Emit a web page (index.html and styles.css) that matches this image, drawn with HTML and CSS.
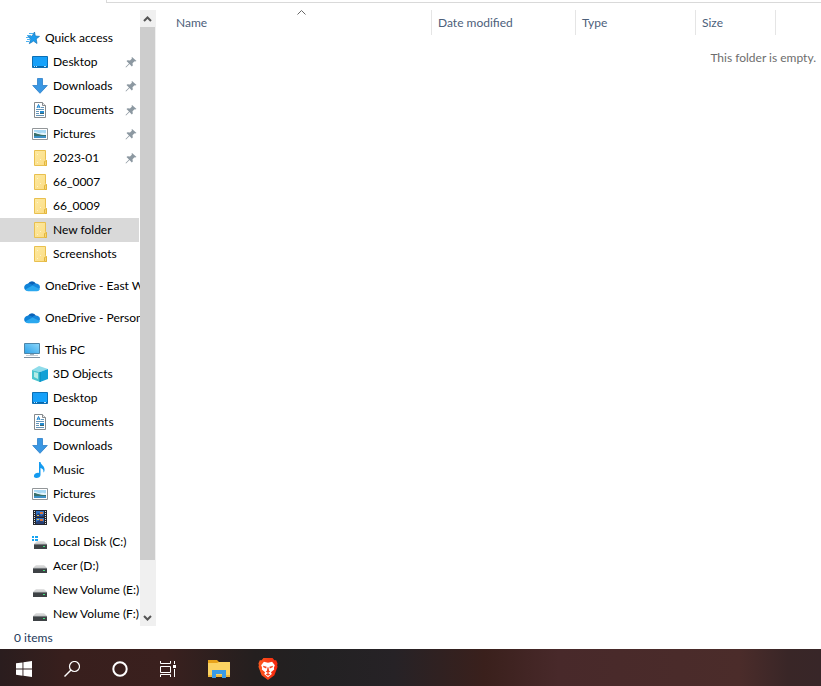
FILE: index.html
```html
<!DOCTYPE html>
<html lang="en">
<head>
  <meta charset="UTF-8">
  <title>New folder</title>
  <meta name="viewport" content="width=device-width, initial-scale=1">
  <link rel="stylesheet" href="styles.css">
</head>
<body>
  <!-- shared icons -->
  <svg class="sprite" aria-hidden="true">
    <defs>
      <linearGradient id="blue" x1="0" y1="0" x2="1" y2="1"><stop offset="0" stop-color="#1a9cf4"/><stop offset="1" stop-color="#12a5ff"/></linearGradient>
      <linearGradient id="screen" x1="0" y1="1" x2="1" y2="0"><stop offset="0" stop-color="#2ba0e8"/><stop offset="1" stop-color="#8dd8fb"/></linearGradient>
      <linearGradient id="paper" x1="0" y1="0" x2="1" y2="1"><stop offset="0" stop-color="#fde9a0"/><stop offset="1" stop-color="#fbdc84"/></linearGradient>
      <linearGradient id="lid" x1="0" y1="0" x2="0" y2="1"><stop offset="0" stop-color="#e6e6e6"/><stop offset="1" stop-color="#c4c6c7"/></linearGradient>
      <linearGradient id="lion" x1="0" y1="0" x2="1" y2="0"><stop offset="0" stop-color="#ff5a1f"/><stop offset="1" stop-color="#f4230c"/></linearGradient>
    </defs>
    <symbol id="i-star" viewBox="0 0 16 16">
      <path d="M10.500 2l.8 4 4.200.4-3.300 2.500.8 4.600-3.500-2.400-4.200 2.600 1.400-4.500L4 6.400l4-.2z" fill="#1c9cee" stroke="#1173b8" stroke-width=".7"/>
      <path d="M5 3.500h4M3 5.500h4M2 7.500h3M3 9.500h3M2 11.500h3" stroke="#4db3f3"/>
    </symbol>
    <symbol id="i-desktop" viewBox="0 0 16 16">
      <path d="M.5 2.500h15v11H.5z" fill="url(#blue)" stroke="#0b6fb5"/>
      <path d="M1 12.500h14" stroke="#0868ac"/><path d="M2 12.500h1m1 0h1m7 0h2" stroke="#bce5ff"/>
    </symbol>
    <symbol id="i-down" viewBox="0 0 16 16">
      <path d="M5.500.5h5v7h4.800L8 15.300.7 7.500h4.800z" fill="#3a97e3" stroke="#2b7fca" stroke-width=".8"/>
    </symbol>
    <symbol id="i-doc" viewBox="0 0 16 16">
      <path d="M2.500.5h8l3 3v12h-11z" fill="#fff" stroke="#85898c"/>
      <path d="M10.500.5v3h3" fill="#eee" stroke="#85898c"/>
      <path d="M5 6l1.500-3.500L8 6M5.500 5h2" fill="none" stroke="#1580ce"/>
      <path d="M9 5.500h3M4 7.500h8M4 9.500h3M4 11.500h3M4 13.500h8" stroke="#6495b9"/>
      <path d="M8 9h4v3H8z" fill="#258bd0"/><path d="M8 11h4v1H8z" fill="#3a6672"/>
    </symbol>
    <symbol id="i-pic" viewBox="0 0 16 16">
      <path d="M.5 2.500h15v11H.5z" fill="#fff" stroke="#929699"/>
      <path d="M2 4h12v8H2z" fill="#a6d8f5"/><path d="M2 6c3-1 4 2 7 1s3 1 5 0v2H2z" fill="#e5f5fc"/>
      <path d="M2 7c3 0 4 2 12 2v1H2z" fill="#39716c"/><path d="M2 10h12v2H2z" fill="#3c8fc5"/>
    </symbol>
    <symbol id="i-folder" viewBox="0 0 16 16">
      <path d="M2.500.5h11v9l1 1v5h-12z" fill="url(#paper)" stroke="#e9c04f"/>
      <path d="M12.500 15v-3.500l2-1v5h-2" fill="#f8d675" stroke="#e2b63e"/>
      <path d="M5 4h1v1H5zm3 5h1v1H8zm-3 3h1v1H5z" fill="#fff4c9"/>
    </symbol>
    <symbol id="i-cloud" viewBox="0 0 16 16">
      <path d="M4 6a4.300 4.300 0 0 1 8 0l-3 4-6-.5z" fill="#0a62b8"/>
      <path d="M3.500 5.700c2-.4 3 .2 5 1.300L4 12.600C-1 13-1 6.500 3.500 5.700z" fill="#1083d8"/>
      <path d="M8 7.200c3-3 8-1.500 8 2L15 12l-8-4z" fill="#1787dc"/>
      <path d="M1.200 11.500L8.500 7.500l7.300 3.500c-.4 1.500-1.500 2.200-2.800 2.200H4c-1.200 0-2-.6-2.800-1.700z" fill="#2ba8ef"/>
    </symbol>
    <symbol id="i-pc" viewBox="0 0 16 16">
      <path d="M.5 1.500h15v10H.5z" fill="url(#screen)" stroke="#4e86a9"/>
      <path d="M6 12h4v1H6z" fill="#a5b3bf"/><path d="M2 13.500h12" stroke="#c4ced6"/><path d="M0 15.500h16" stroke="#7f90a0"/>
    </symbol>
    <symbol id="i-cube" viewBox="0 0 16 16">
      <path d="M0 4l7-4 9 3-8 3z" fill="#8fdcea"/><path d="M0 4l8 2v10l-8-3z" fill="#4cc6cf"/>
      <path d="M8 6l8-3v10l-8 3z" fill="#12a0d6"/><path d="M2 6l4 1v6l-4-2z" fill="#b5ece6"/><path d="M8 6v10" stroke="#0789b6"/>
    </symbol>
    <symbol id="i-music" viewBox="0 0 16 16">
      <path d="M7 0h1.500c.2 3 4.700 4 4 8.500-.1 1-.6 1.700-1 2 .3-3-1.300-4-3-4.500V13c0 2-2 3-4 3s-3-1-2.500-2.500C2.500 11.500 5 10.500 7 11z" fill="#149bf0"/>
    </symbol>
    <symbol id="i-video" viewBox="0 0 16 16">
      <path d="M1 0h14v15H1z" fill="#24272d"/>
      <path d="M2.500 1v14M13.500 1v14" stroke="#dfe2e4" stroke-dasharray="1 1"/>
      <path d="M4 1h8v6H4zM4 8h8v6H4z" fill="#2f72c4"/>
      <path d="M4 5l3-2 2 3 3-2v3H4zM4 12l4-2 4 2v2H4z" fill="#263e72"/>
      <path d="M8 2h3v2H8zM8 9h3v2H8z" fill="#d8753f"/><path d="M5 5h2v1H5zm0 4h2v1H5z" fill="#e2c155"/>
    </symbol>
    <symbol id="i-disk" viewBox="0 0 16 16">
      <path d="M4 7h8l3 3H1z" fill="url(#lid)"/><path d="M1 10h14v5H1z" fill="#3e4245"/>
      <path d="M1 10.500h14" stroke="#74787b"/><path d="M11 12h2v1h-2z" fill="#43e07c"/>
    </symbol>
    <symbol id="i-windisk" viewBox="0 0 16 16">
      <path d="M5 7h7l3 3H2z" fill="url(#lid)"/><path d="M2 10h13v5H2z" fill="#3e4245"/>
      <path d="M2 10.500h13" stroke="#74787b"/><path d="M11 12h2v1h-2z" fill="#43e07c"/>
      <path d="M0 2h2v2H0zm3 0h3v2H3zM0 5h2v2H0zm3 0h3v2H3z" fill="#16a4f2"/>
    </symbol>
    <symbol id="i-pin" viewBox="0 0 12 12">
      <path d="M7 1l4.500 4-1.500.5-.5-.3-2 2 .3 2.300-1 1L4.500 8 1 11.500l-.5-.5L4 7.500 1.500 5l1-.8 2.500.3 2-2L6.500 2z" fill="#8c98a1"/>
    </symbol>
  </svg>

  <div class="ribbon-edge"></div>

  <main class="explorer">
    <nav class="sidebar" aria-label="Folders">
      <div class="tree">
        <ul class="group">
          <li><a class="root" href="#"><svg class="icon"><use href="#i-star"/></svg><span>Quick access</span></a></li>
          <li><a href="#"><svg class="icon"><use href="#i-desktop"/></svg><span>Desktop</span><svg class="pin"><use href="#i-pin"/></svg></a></li>
          <li><a href="#"><svg class="icon"><use href="#i-down"/></svg><span>Downloads</span><svg class="pin"><use href="#i-pin"/></svg></a></li>
          <li><a href="#"><svg class="icon"><use href="#i-doc"/></svg><span>Documents</span><svg class="pin"><use href="#i-pin"/></svg></a></li>
          <li><a href="#"><svg class="icon"><use href="#i-pic"/></svg><span>Pictures</span><svg class="pin"><use href="#i-pin"/></svg></a></li>
          <li><a href="#"><svg class="icon"><use href="#i-folder"/></svg><span>2023-01</span><svg class="pin"><use href="#i-pin"/></svg></a></li>
          <li><a href="#"><svg class="icon"><use href="#i-folder"/></svg><span>66_0007</span></a></li>
          <li><a href="#"><svg class="icon"><use href="#i-folder"/></svg><span>66_0009</span></a></li>
          <li><a class="selected" href="#" aria-current="page"><svg class="icon"><use href="#i-folder"/></svg><span>New folder</span></a></li>
          <li><a href="#"><svg class="icon"><use href="#i-folder"/></svg><span>Screenshots</span></a></li>
        </ul>
        <ul class="group">
          <li><a class="root" href="#"><svg class="icon"><use href="#i-cloud"/></svg><span>OneDrive - East W</span></a></li>
        </ul>
        <ul class="group">
          <li><a class="root" href="#"><svg class="icon"><use href="#i-cloud"/></svg><span>OneDrive - Person</span></a></li>
        </ul>
        <ul class="group">
          <li><a class="root" href="#"><svg class="icon"><use href="#i-pc"/></svg><span>This PC</span></a></li>
          <li><a href="#"><svg class="icon"><use href="#i-cube"/></svg><span>3D Objects</span></a></li>
          <li><a href="#"><svg class="icon"><use href="#i-desktop"/></svg><span>Desktop</span></a></li>
          <li><a href="#"><svg class="icon"><use href="#i-doc"/></svg><span>Documents</span></a></li>
          <li><a href="#"><svg class="icon"><use href="#i-down"/></svg><span>Downloads</span></a></li>
          <li><a href="#"><svg class="icon"><use href="#i-music"/></svg><span>Music</span></a></li>
          <li><a href="#"><svg class="icon"><use href="#i-pic"/></svg><span>Pictures</span></a></li>
          <li><a href="#"><svg class="icon"><use href="#i-video"/></svg><span>Videos</span></a></li>
          <li><a href="#"><svg class="icon"><use href="#i-windisk"/></svg><span>Local Disk (C:)</span></a></li>
          <li><a href="#"><svg class="icon"><use href="#i-disk"/></svg><span>Acer (D:)</span></a></li>
          <li><a href="#"><svg class="icon"><use href="#i-disk"/></svg><span>New Volume (E:)</span></a></li>
          <li><a href="#"><svg class="icon"><use href="#i-disk"/></svg><span>New Volume (F:)</span></a></li>
        </ul>
      </div>
      <div class="scrollbar">
        <button aria-label="Scroll up"><svg viewBox="0 0 9 6"><path d="M1 5l3.500-3.500L8 5"/></svg></button>
        <div class="track"><div class="thumb"></div></div>
        <button aria-label="Scroll down"><svg viewBox="0 0 9 6"><path d="M1 1l3.500 3.500L8 1"/></svg></button>
      </div>
    </nav>

    <section class="files">
      <table>
        <thead>
          <tr>
            <th class="col-name" aria-sort="ascending"><button>Name</button><svg class="sort" viewBox="0 0 9 5"><path d="M.5 4.500l4-4 4 4"/></svg></th>
            <th class="col-date"><button>Date modified</button></th>
            <th class="col-type"><button>Type</button></th>
            <th class="col-size"><button>Size</button></th>
            <td></td>
          </tr>
        </thead>
        <tbody>
          <tr><td class="empty" colspan="5">This folder is empty.</td></tr>
        </tbody>
      </table>
    </section>
  </main>

  <div class="status">0 items</div>

  <footer class="taskbar">
    <button aria-label="Start">
      <svg width="16" height="16" viewBox="0 0 16 16" fill="#fff"><path d="M0 2.300L6.500 1.400v6.200H0zM7.400 1.200L16 0v7.600H7.400zM0 8.500h6.500v6.200L0 13.800zM7.400 8.500H16V16l-8.600-1.200z"/></svg>
    </button>
    <button aria-label="Search">
      <svg width="16" height="16" viewBox="0 0 16 16" fill="none" stroke="#fff"><circle cx="10.500" cy="5.500" r="5" stroke-width="1.200"/><path d="M7 9L.5 15.500" stroke-width="1.400"/></svg>
    </button>
    <button aria-label="Cortana">
      <svg width="16" height="16" viewBox="0 0 16 16" fill="none" stroke="#fff"><circle cx="8" cy="8" r="6.700" stroke-width="2"/></svg>
    </button>
    <button aria-label="Task view">
      <svg width="16" height="16" viewBox="0 0 16 16" fill="none" stroke="#fff"><path d="M.5 0v2.500h10V0M.5 5.500h10v6H.5zM.5 16v-2.500h10V16M14.500 0v3M14.500 8v8"/><path d="M13 4h3v3h-3z" fill="#fff" stroke="none"/></svg>
    </button>
    <div class="apps">
      <button aria-label="File Explorer">
        <svg width="22" height="18" viewBox="0 0 22 18"><path d="M0 0h9l2 2h11v4H0z" fill="#e8a31b"/><path d="M0 3h9l2-1h11v15H0z" fill="#fbd262"/><path d="M0 15h22v2H0z" fill="#edb63a"/><path d="M4 18v-8h14v8h-4v-4H8v4z" fill="#3a9be6"/></svg>
      </button>
      <button aria-label="Brave">
        <svg width="20" height="24" viewBox="0 0 22 24"><path d="M6 0h10l2 2.500 2-.2L21.500 6 21 8l.5 1.500L18 19l-7 5-7-5L.5 9.500 1 8 .5 6 2 2.300l2 .2z" fill="url(#lion)"/><path d="M6.500 4L11 5l4.500-1 3 4-1 2.500.3 2-3.600 3 1 2L11 21l-4.200-3.500 1-2-3.600-3 .3-2-1-2.500z" fill="#fff"/><path d="M5.500 8.500l4 1-.5 2-3-1.500zM16.500 8.500l-4 1 .5 2 3-1.500zM10.500 10h1l.7 4 1.300.8L11 16.300l-2.500-1.500 1.300-.8zM8.500 18l2.500-1.500 2.500 1.500-2.500 1.500z" fill="#f5421b"/></svg>
      </button>
    </div>
  </footer>
</body>
</html>
```
FILE: styles.css
```css
* {
  box-sizing: border-box;
}
body {
  margin: 0;
  height: 100vh;
  display: flex;
  flex-direction: column;
  overflow: hidden;
  background: #fff;
  color: #000;
  font: 12px/24px Lato, "Open Sans", sans-serif;
}
button {
  padding: 0;
  border: 0;
  background: none;
  color: inherit;
  font: inherit;
}
.sprite {
  position: absolute;
  width: 0;
  height: 0;
}
.ribbon-edge {
  flex: none;
  height: 3px;
  margin-left: 106px;
  border-left: 1px solid #d9d9d9;
  border-bottom: 1px solid #d9d9d9;
}

.explorer {
  flex: 1;
  min-height: 0;
  display: flex;
  padding-top: 7px;
}

/* folder tree */
.sidebar {
  flex: none;
  display: flex;
  width: 156px;
}
.tree {
  flex: 1;
  min-width: 0;
  padding-top: 16px;
  overflow: hidden;
}
.group {
  margin: 0 0 8px;
  padding: 0;
  list-style: none;
}
.tree a {
  display: flex;
  align-items: center;
  gap: 5px;
  height: 24px;
  margin-right: 1px;
  padding-left: 32px;
  color: #000;
  text-decoration: none;
  white-space: nowrap;
}
.tree a.root {
  padding-left: 24px;
}
.tree a.selected {
  background: #d9d9d9;
}
.icon {
  flex: none;
  width: 16px;
  height: 16px;
}
.pin {
  flex: none;
  width: 12px;
  height: 12px;
  margin-left: auto;
  margin-right: 2px;
}

.scrollbar {
  flex: none;
  display: flex;
  flex-direction: column;
  width: 16px;
  background: #f0f0f0;
}
.scrollbar button {
  display: flex;
  align-items: center;
  justify-content: center;
  height: 17px;
  padding-right: 1px;
}
.scrollbar svg {
  width: 9px;
  height: 6px;
  fill: none;
  stroke: #555;
  stroke-width: 2;
}
.track {
  flex: 1;
}
.thumb {
  height: 91.6%;
  margin-right: 1px;
  background: #cdcdcd;
}

/* file list */
.files {
  flex: 1;
  min-width: 0;
  padding-left: 14px;
}
table {
  width: 100%;
  table-layout: fixed;
  border-spacing: 0;
}
th {
  position: relative;
  height: 25px;
  padding: 0 0 0 6px;
  border-right: 1px solid #e5e5e5;
  color: #4c607a;
  font-weight: normal;
  text-align: left;
}
th button {
  width: 100%;
  text-align: left;
}
.col-name { width: 262px; }
.col-date { width: 144px; }
.col-type { width: 120px; }
.col-size { width: 80px; }
.sort {
  position: absolute;
  top: 0;
  left: 50%;
  width: 9px;
  height: 5px;
  margin-left: -4px;
  fill: none;
  stroke: #666;
}
.empty {
  padding: 11px 5px 0 0;
  color: #6d6d6d;
  text-align: right;
}

.status {
  flex: none;
  height: 23px;
  padding-left: 14px;
  color: #1e395b;
}

.taskbar {
  flex: none;
  display: flex;
  height: 37px;
  padding-top: 2px;
  background: linear-gradient(90deg, #2a1d1e, #381f1d 8%, #3a201e 20%, #241f1f 31%, #222122 38%, #262226 48%, #3a201c 59%, #48292a 68%, #4b2c2a 90%, #392627 96%, #382628);
}
.taskbar button {
  display: flex;
  align-items: center;
  justify-content: center;
  width: 48px;
}
.apps {
  display: flex;
  gap: 1px;
  margin-left: 3px;
}
```
